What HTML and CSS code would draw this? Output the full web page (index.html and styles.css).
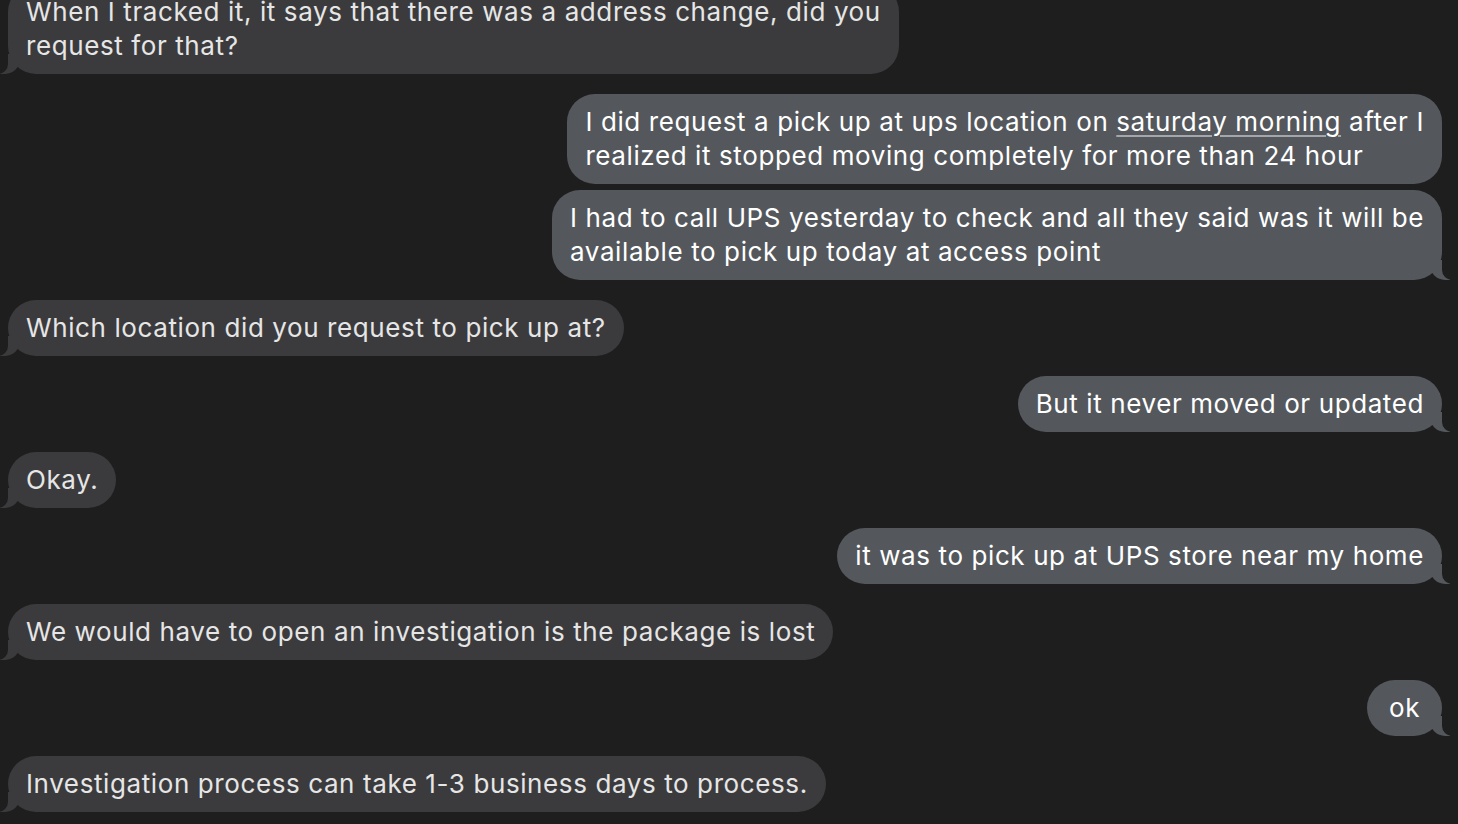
FILE: index.html
```html
<!DOCTYPE html>
<html lang="en">
<head>
    <meta charset="UTF-8">
    <meta name="viewport" content="width=device-width, initial-scale=1.0">
    <title>Messages</title>
    <link rel="stylesheet" href="styles.css">
</head>
<body>
<div class="thread">
    <div class="msg them first">When I tracked it, it says that there was a address change, did you<br>request for that?</div>

    <div class="msg me group">I did request a pick up at ups location on <span class="link">saturday morning</span> after I<br>realized it stopped moving completely for more than 24 hour</div>
    <div class="msg me">I had to call UPS yesterday to check and all they said was it will be<br>available to pick up today at access point</div>

    <div class="msg them">Which location did you request to pick up at?</div>

    <div class="msg me">But it never moved or updated</div>

    <div class="msg them">Okay.</div>

    <div class="msg me">it was to pick up at UPS store near my home</div>

    <div class="msg them">We would have to open an investigation is the package is lost</div>

    <div class="msg me">ok</div>

    <div class="msg them">Investigation process can take 1-3 business days to process.</div>
</div>
</body>
</html>
```

FILE: styles.css
```css
body {
    margin: 0;
    background-color: #1e1e1e;
    font-family: Inter, "Noto Sans", sans-serif;
    overflow: hidden;
}

.thread {
    display: flex;
    flex-direction: column;
    gap: 20px;
    padding: 0 16px 0 8px;
    margin-top: -16px;
}

.msg {
    position: relative;
    padding: 11px 18px;
    font-size: 26px;
    line-height: 34px;
    letter-spacing: 0.6px;
    border-radius: 28px;
    white-space: nowrap;
    max-width: max-content;
    min-width: 39px;
    text-align: center;
}

.msg.first,
.msg.group,
.msg:has(br) {
    text-align: left;
}

.msg.group {
    margin-bottom: -14px;
}

.them {
    align-self: flex-start;
    background-color: #3b3b3d;
    color: #e6e6e6;
}

.me {
    align-self: flex-end;
    background-color: #54585d;
    color: #ffffff;
}

/* bubble tails */
.msg::before,
.msg::after {
    content: "";
    position: absolute;
    bottom: 0;
    height: 20px;
}

.them::before {
    left: -8px;
    width: 20px;
    background-color: #3b3b3d;
    border-bottom-right-radius: 15px;
}

.them::after {
    left: -10px;
    width: 10px;
    background-color: #1e1e1e;
    border-bottom-right-radius: 10px;
}

.me::before {
    right: -8px;
    width: 20px;
    background-color: #54585d;
    border-bottom-left-radius: 15px;
}

.me::after {
    right: -10px;
    width: 10px;
    background-color: #1e1e1e;
    border-bottom-left-radius: 10px;
}

.me.group::before,
.me.group::after {
    display: none;
}

.link {
    text-decoration: underline;
    text-decoration-color: #a3a7ab;
    text-decoration-thickness: 1.5px;
    text-underline-offset: 4px;
}
```
